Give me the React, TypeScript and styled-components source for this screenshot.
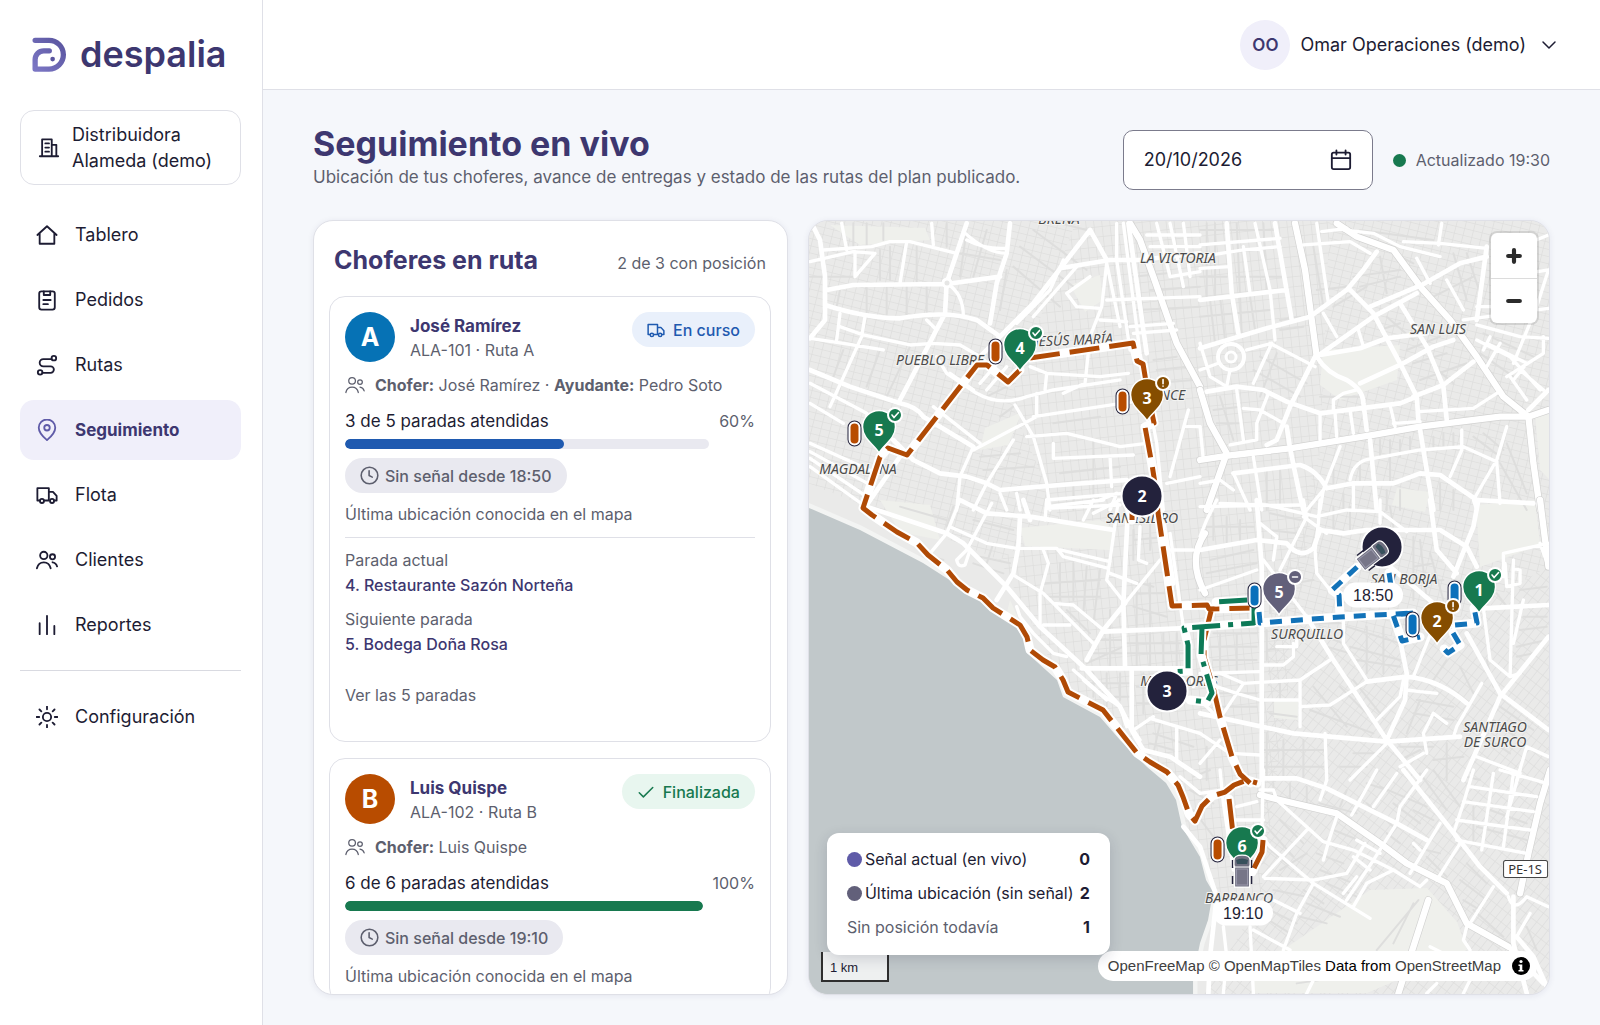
import React from "react";
import styled, { createGlobalStyle } from "styled-components";

const c = {
  ink: "#1d1c33",
  brand: "#3d3770",
  accent: "#5f5ba8",
  muted: "#5d5f6e",
  line: "#dfe0e7",
  page: "#f5f7fb",
  tint: "#f0effa",
  blue: "#1f5ab0",
  green: "#17794f",
  orange: "#b84c00",
  chip: "#e9e9f0",
};

const GlobalStyle = createGlobalStyle`
  *, *::before, *::after { box-sizing: border-box; }
  body {
    margin: 0;
    background: ${c.page};
    color: ${c.ink};
    font-family: Inter, "Open Sans", sans-serif;
    font-size: 16px;
    line-height: 24px;
  }
  h1, h2, h3, p, ul, dl, dd { margin: 0; padding: 0; }
  ul { list-style: none; }
  button, input { font: inherit; color: inherit; }
  a { color: inherit; text-decoration: none; }
`;

/* ---------- icons ---------- */

const Glyph = styled.svg<{ $size?: number; $weight?: number }>`
  width: ${(p) => p.$size ?? 24}px;
  height: ${(p) => p.$size ?? 24}px;
  flex: none;
  fill: none;
  stroke: currentColor;
  stroke-width: ${(p) => p.$weight ?? 2};
  stroke-linecap: round;
  stroke-linejoin: round;
`;

type IconName =
  | "building" | "home" | "clipboard" | "route" | "pin" | "truck" | "users"
  | "bars" | "sun" | "chevron" | "calendar" | "clock" | "check";

const shapes: Record<IconName, React.ReactNode> = {
  building: <path d="M4.5 21V2.5h10.500V21M15 8.500h5V21M2 21h20M8 7h4M8 11.500h4M8 16h4" />,
  home: <path d="M1.500 12 12 2.500 22.500 12M4 10v11.500h16V10" />,
  clipboard: (
    <>
      <rect x="3.500" y="2.500" width="17" height="20" rx="2.500" />
      <path d="M8.500 2.500v4h7v-4M8 12h8M8 16.500h5" />
    </>
  ),
  route: (
    <>
      <circle cx="19.500" cy="4.500" r="2.500" />
      <circle cx="4.500" cy="20" r="2.500" />
      <path d="M17 5.500H8a4 4 0 0 0 0 8h8a3.500 3.500 0 0 1 0 7H7" />
    </>
  ),
  pin: (
    <>
      <path d="M12 23S3 15.500 3 9.500a9 9 0 0 1 18 0C21 15.500 12 23 12 23z" />
      <circle cx="12" cy="9.500" r="3" />
    </>
  ),
  truck: (
    <>
      <path d="M4 18H1.500V4.500h12.500V18H9M14 8.500h4.500L22.500 13v5H20" />
      <circle cx="6.500" cy="18.500" r="2.200" />
      <circle cx="17.500" cy="18.500" r="2.200" />
    </>
  ),
  users: (
    <>
      <circle cx="8.500" cy="7" r="4" />
      <path d="M1 21c1-4.500 3.800-6.500 7.500-6.500S15 16.500 16 21M18 14.500c2.600.3 4.200 1.800 5 4.500" />
      <circle cx="18" cy="8.500" r="2.800" />
    </>
  ),
  bars: <path d="M4 10v12M12 2v20M20 13v9" />,
  sun: (
    <>
      <circle cx="12" cy="12" r="4.500" />
      <path d="M12 .5v3M12 20.500v3M.5 12h3M20.500 12h3M3.800 3.800l2 2M18.200 18.200l2 2M3.800 20.200l2-2M18.200 5.800l2-2" />
    </>
  ),
  chevron: <path d="m4 8 8 8 8-8" />,
  calendar: (
    <>
      <rect x="2" y="4" width="20" height="18" rx="2" />
      <path d="M2 10h20M7 1.500V6M17 1.500V6" />
    </>
  ),
  clock: (
    <>
      <circle cx="12" cy="12" r="10.500" />
      <path d="M11.500 6v6l4 2" />
    </>
  ),
  check: <path d="m3 13 5.500 5.500L21 6" />,
};

const Icon = ({ name, size, weight }: { name: IconName; size?: number; weight?: number }) => (
  <Glyph viewBox="0 0 24 24" $size={size} $weight={weight} aria-hidden="true">
    {shapes[name]}
  </Glyph>
);

/* ---------- shell ---------- */

const Shell = styled.div`
  display: grid;
  grid-template-columns: 263px minmax(0, 1fr);
  height: 100vh;
`;

const Sidebar = styled.aside`
  display: flex;
  flex-direction: column;
  padding: 32px 21px 20px 20px;
  background: #fff;
  border-right: 1px solid ${c.line};
`;

const Brand = styled.a`
  display: flex;
  align-items: center;
  gap: 13px;
  height: 44px;
  padding-left: 11px;
  font-size: 36px;
  font-weight: 600;
  line-height: 44px;
  color: ${c.brand};
`;

const Mark = styled.svg`
  width: 36px;
  height: 37px;
  flex: none;
`;

const Tenant = styled.button`
  display: flex;
  align-items: center;
  gap: 12px;
  margin-top: 34px;
  padding: 10px 17px;
  height: 75px;
  border: 1px solid ${c.line};
  border-radius: 14px;
  background: #fff;
  font-size: 18px;
  line-height: 26px;
  text-align: left;
`;

const NavList = styled.ul`
  display: flex;
  flex-direction: column;
  gap: 5px;
  margin-top: 20px;
`;

const NavLink = styled.a<{ $active?: boolean }>`
  display: flex;
  align-items: center;
  gap: 17px;
  height: 60px;
  padding: 0 16px;
  border-radius: 14px;
  font-size: ${(p) => (p.$active ? 17 : 18)}px;
  font-weight: ${(p) => (p.$active ? 700 : 400)};
  color: ${(p) => (p.$active ? c.brand : c.ink)};
  background: ${(p) => (p.$active ? c.tint : "transparent")};

  svg { color: ${(p) => (p.$active ? c.accent : c.ink)}; }
`;

const Rule = styled.hr`
  width: 100%;
  margin: 15px 0 -4px;
  border: 0;
  border-top: 1px solid #d9dae1;
`;

const Column = styled.div`
  display: flex;
  flex-direction: column;
  min-width: 0;
  min-height: 0;
`;

const TopBar = styled.header`
  display: flex;
  justify-content: flex-end;
  align-items: center;
  flex: none;
  height: 90px;
  padding: 0 42px;
  background: #fff;
  border-bottom: 1px solid ${c.line};
`;

const UserMenu = styled.button`
  display: flex;
  align-items: center;
  gap: 10px;
  padding: 0;
  border: 0;
  background: none;
  font-size: 18px;

  > svg { margin-left: 4px; }
`;

const Initials = styled.span`
  display: grid;
  place-items: center;
  width: 50px;
  height: 50px;
  border-radius: 50%;
  background: ${c.tint};
  color: ${c.brand};
  font-size: 17px;
  font-weight: 600;
`;

const Main = styled.main`
  display: flex;
  flex-direction: column;
  gap: 30px;
  flex: 1;
  min-height: 0;
  padding: 30px 50px;
`;

const PageHead = styled.div`
  display: flex;
  justify-content: space-between;
  align-items: flex-end;
  padding-top: 2px;
`;

const Title = styled.h1`
  font-size: 34px;
  line-height: 43px;
  font-weight: 700;
  color: ${c.brand};
`;

const Muted = styled.p<{ $size?: number }>`
  font-size: ${(p) => p.$size ?? 16}px;
  line-height: ${(p) => (p.$size ? 25 : 24)}px;
  color: ${c.muted};
`;

const HeadTools = styled.div`
  display: flex;
  align-items: center;
  gap: 20px;
`;

const DateField = styled.label`
  display: flex;
  align-items: center;
  width: 250px;
  height: 60px;
  padding: 0 20px;
  border: 1px solid #7b7b8c;
  border-radius: 10px;
  background: #fff;
`;

const DateInput = styled.input`
  flex: 1;
  min-width: 0;
  padding: 0;
  border: 0;
  outline: 0;
  background: none;
  font-size: 18px;
`;

const IconButton = styled.button`
  display: grid;
  place-items: center;
  padding: 0;
  border: 0;
  background: none;
`;

const Updated = styled.span`
  display: flex;
  align-items: center;
  gap: 10px;
  font-size: 16px;
  color: ${c.muted};
`;

const Dot = styled.span<{ $color: string; $size: number }>`
  flex: none;
  width: ${(p) => p.$size}px;
  height: ${(p) => p.$size}px;
  border-radius: 50%;
  background: ${(p) => p.$color};
`;

const Panels = styled.div`
  display: grid;
  grid-template-columns: minmax(0, 16fr) minmax(0, 25fr);
  gap: 20px;
  flex: 1;
  min-height: 0;
`;

/* ---------- drivers ---------- */

const Panel = styled.section`
  display: flex;
  flex-direction: column;
  min-height: 0;
  overflow: hidden;
  border: 1px solid ${c.line};
  border-radius: 20px;
  background: #fff;
  box-shadow: 0 1px 6px rgba(40, 40, 90, 0.08);
`;

const PanelHead = styled.div`
  display: flex;
  justify-content: space-between;
  align-items: baseline;
  padding: 21px 21px 18px 20px;
`;

const PanelTitle = styled.h2`
  font-size: 25px;
  line-height: 36px;
  font-weight: 700;
  color: ${c.brand};
`;

const CardList = styled.ul`
  display: flex;
  flex-direction: column;
  gap: 16px;
  flex: 1;
  min-height: 0;
  overflow-y: auto;
  padding: 0 16px 0 15px;
  scrollbar-width: none;
`;

const Card = styled.li`
  flex: none;
  padding: 15px;
  border: 1px solid ${c.line};
  border-radius: 16px;
`;

const CardHead = styled.div`
  display: flex;
  align-items: flex-start;
  gap: 15px;
`;

const RouteBadge = styled.span<{ $color: string }>`
  display: grid;
  place-items: center;
  flex: none;
  width: 50px;
  height: 50px;
  border-radius: 50%;
  background: ${(p) => p.$color};
  color: #fff;
  font-size: 25px;
  font-weight: 700;
`;

const Person = styled.div`
  flex: 1;
  padding-top: 2px;
`;

const PersonName = styled.h3`
  font-size: 17px;
  line-height: 24px;
  font-weight: 700;
  color: ${c.brand};
`;

const Tag = styled.span<{ $fg: string; $bg: string; $gap?: number }>`
  display: inline-flex;
  align-items: center;
  gap: ${(p) => p.$gap ?? 8}px;
  height: 35px;
  padding: 0 15px;
  border-radius: 18px;
  background: ${(p) => p.$bg};
  color: ${(p) => p.$fg};
  font-size: 16px;
  font-weight: 500;
`;

const Crew = styled.div`
  display: flex;
  align-items: center;
  gap: 10px;
  margin-top: 11px;
  color: ${c.muted};
  font-size: 16px;
`;

const Progress = styled.div`
  display: grid;
  grid-template-columns: minmax(0, 1fr) auto;
  column-gap: 10px;
  row-gap: 6px;
  margin-top: 12px;
  font-size: 17px;
`;

const Track = styled.div`
  height: 10px;
  border-radius: 5px;
  background: ${c.chip};
  overflow: hidden;
`;

const Fill = styled.div<{ $color: string }>`
  height: 100%;
  border-radius: 5px;
  background: ${(p) => p.$color};
`;

const Signal = styled.div`
  display: flex;
  flex-direction: column;
  align-items: flex-start;
  gap: 9px;
  margin-top: 9px;
`;

const Stops = styled.dl`
  margin-top: 11px;
  padding-top: 10px;
  border-top: 1px solid ${c.line};
  font-size: 16px;
  line-height: 25px;

  dt { color: ${c.muted}; }
  dd { color: ${c.brand}; font-weight: 500; }
  dd + dt { margin-top: 9px; }
`;

const MoreButton = styled.button`
  height: 60px;
  margin: 8px 0 1px;
  padding: 0;
  border: 0;
  background: none;
  color: ${c.muted};
  font-size: 16px;
`;

interface Driver {
  letter: string; color: string; name: string; unit: string; helper?: string;
  done: number; total: number; bar: string; last: string;
  status: { text: string; icon: IconName; fg: string; bg: string };
  current?: string; next?: string;
}

const drivers: Driver[] = [
  {
    letter: "A", color: "#0672b5", name: "José Ramírez", unit: "ALA-101 · Ruta A", helper: "Pedro Soto",
    done: 3, total: 5, bar: c.blue, last: "18:50",
    status: { text: "En curso", icon: "truck", fg: c.blue, bg: "#e9f0fb" },
    current: "4. Restaurante Sazón Norteña", next: "5. Bodega Doña Rosa",
  },
  {
    letter: "B", color: c.orange, name: "Luis Quispe", unit: "ALA-102 · Ruta B",
    done: 6, total: 6, bar: c.green, last: "19:10",
    status: { text: "Finalizada", icon: "check", fg: c.green, bg: "#e8f6ef" },
  },
];

const DriverCard = ({ d }: { d: Driver }) => {
  const percent = Math.round((d.done / d.total) * 100);
  return (
    <Card>
      <CardHead>
        <RouteBadge $color={d.color}>{d.letter}</RouteBadge>
        <Person>
          <PersonName>{d.name}</PersonName>
          <Muted>{d.unit}</Muted>
        </Person>
        <Tag $fg={d.status.fg} $bg={d.status.bg}>
          <Icon name={d.status.icon} size={18} />
          {d.status.text}
        </Tag>
      </CardHead>
      <Crew>
        <Icon name="users" size={20} weight={1.5} />
        <span>
          <b>Chofer:</b> {d.name}
          {d.helper && <> · <b>Ayudante:</b> {d.helper}</>}
        </span>
      </Crew>
      <Progress>
        <span>{d.done} de {d.total} paradas atendidas</span>
        <Muted as="span">{percent}%</Muted>
        <Track>
          <Fill $color={d.bar} style={{ width: `${percent}%` }} />
        </Track>
      </Progress>
      <Signal>
        <Tag $fg={c.muted} $bg={c.chip} $gap={6}>
          <Icon name="clock" size={19} />
          Sin señal desde {d.last}
        </Tag>
        <Muted>Última ubicación conocida en el mapa</Muted>
      </Signal>
      {d.current && (
        <>
          <Stops>
            <dt>Parada actual</dt>
            <dd>{d.current}</dd>
            <dt>Siguiente parada</dt>
            <dd>{d.next}</dd>
          </Stops>
          <MoreButton>Ver las {d.total} paradas</MoreButton>
        </>
      )}
    </Card>
  );
};

/* ---------- map ---------- */

const MapPanel = styled.section`
  position: relative;
  min-height: 0;
  overflow: hidden;
  border: 1px solid ${c.line};
  border-radius: 20px;
  background: #ededeb;
  box-shadow: 0 1px 6px rgba(40, 40, 90, 0.08);
`;

const MapCanvas = styled.svg`
  display: block;
  width: 100%;
  height: 100%;
`;

const PlaceName = styled.text`
  font: italic 14px "Noto Sans", sans-serif;
  fill: #4b4b4b;
  stroke: #f4f4f2;
  stroke-width: 2px;
  paint-order: stroke;
  text-anchor: middle;
`;

const MarkerText = styled.text`
  font: 700 16px "Noto Sans", sans-serif;
  fill: #fff;
  text-anchor: middle;
`;

const TimeText = styled.text`
  font: 16px "Liberation Sans", sans-serif;
  fill: ${c.ink};
  text-anchor: middle;
`;

const ShieldText = styled.text`
  font: 13px "Noto Sans", sans-serif;
  fill: #333;
  text-anchor: middle;
`;

const ZoomControls = styled.div`
  position: absolute;
  top: 12px;
  right: 12px;
  width: 46px;
  border-radius: 6px;
  background: #fff;
  box-shadow: 0 0 0 2px rgba(0, 0, 0, 0.1);
`;

const ZoomButton = styled.button`
  display: grid;
  place-items: center;
  width: 46px;
  height: 45px;
  padding: 0;
  border: 0;
  background: none;
  color: #2b2b2b;

  & + & { border-top: 1px solid #dcdcdc; }
`;

const Legend = styled.ul`
  position: absolute;
  left: 18px;
  bottom: 39px;
  z-index: 1;
  display: flex;
  flex-direction: column;
  gap: 10px;
  width: 283px;
  padding: 14px 20px 16px;
  border-radius: 12px;
  background: #fff;
  box-shadow: 0 4px 14px rgba(30, 30, 60, 0.16);
`;

const LegendRow = styled.li<{ $muted?: boolean }>`
  display: flex;
  align-items: center;
  gap: 3px;
  font-size: 16px;
  line-height: 24px;
  color: ${(p) => (p.$muted ? c.muted : c.ink)};

  b { margin-left: auto; color: ${c.ink}; font-weight: 700; }
`;

const Scale = styled.div`
  position: absolute;
  left: 12px;
  bottom: 12px;
  width: 68px;
  height: 30px;
  padding: 6px 7px;
  border: 2px solid #2e2e2e;
  border-top: 0;
  background: rgba(255, 255, 255, 0.72);
  font: 13px/20px "Liberation Sans", sans-serif;
`;

const Attribution = styled.div`
  position: absolute;
  right: 12px;
  bottom: 13px;
  display: flex;
  align-items: center;
  gap: 10px;
  height: 30px;
  padding: 0 6px 0 10px;
  border-radius: 15px;
  background: #fff;
  font: 15px/30px "Liberation Sans", sans-serif;
  color: #000;
  white-space: nowrap;

  a { color: #404040; }
`;

/* Streets are kept per survey sheet; each sheet uses a 3:1 grid over the map units. */
interface Sheet { x: number; y: number; minor: string; streets: string; avenues: string; highways?: string }

const sheets: Sheet[] = [
  {
    x: 800, y: 210,
    minor: "M160 40V120M200 40V110M250 40V90M440 40V110M30 200H160M240 120V210M270 110V210M350 110V215M480 130 600 150M120 240 110 290M200 230V310M260 230V320M320 230V320M380 230V310M130 420 100 500M240 420 200 530M330 410 260 560M500 60 480 200M560 60 520 200M620 180 600 300M700 60 860 180M660 110 820 230M640 170 780 290M860 60 700 20M1000 200 1100 190M1050 240 1200 230M1010 300 1200 290M560 560 640 520M600 620 640 590M540 740 660 730M550 780 700 770M760 640 900 620M780 790 960 770M820 830V900M880 690V900M1060 450 1130 440M1070 480 1160 470M1060 520 1180 510",
    streets: "M30 155 160 125 225 130 165 200V125M125 40 140 120M70 120 215 110 270 95 330 95 470 130M300 220 320 95M395 40 400 105M440 220Q490 250 490 320M490 65Q560 130 620 130M500 90Q560 120 620 115M120 310 110 390M195 320 185 380 90 590M120 350 190 375M380 330 410 360M30 385 130 400 250 420M190 375 330 405 400 400 480 405 540 440 610 500M410 440 440 490 530 550Q600 590 680 560L760 540 960 510M690 470 740 490 900 500 985 490M740 490 735 540M30 520 200 610 210 690M30 580 130 640M30 700 230 790M30 725 220 830M30 745 200 860M30 770 190 885M400 590 540 700M520 710 480 800 470 900M645 585 700 680 740 820 750 900M680 680 800 670 880 690 960 710 1040 700M710 550V620L520 720M700 620 1000 575M760 700V745L1000 735M740 870 970 850M740 895 960 885M930 740 935 830M790 150 750 240 650 340M830 170 700 320M870 200 800 250 830 290 900 295M920 160 905 290 870 380 855 520 790 550M920 270 1200 260M900 330 980 335M990 350 1120 340M1000 370 1130 360M920 160 960 350M1165 600 1110 800M1160 650H1200M1100 820 1200 800M1070 40 1110 200M1110 40 1150 230M1150 40 1170 200M1050 110H1200M1040 75H1200M1110 200 1200 185M560 540 620 470M540 520 600 450M450 490 520 540M640 690 560 820 520 900M600 850 620 900M650 850 660 900M950 40V150L990 420M970 40 1020 430 1070 700 1090 900M900 870 950 850 930 900",
    avenues: "M30 30 60 90 75 200V330L30 385M80 240 160 225 440 222 600 200M500 40 440 220 435 310 300 570M630 40 620 130 590 220 570 340M75 285Q200 325 300 325Q440 300 530 330L600 380M30 480 150 530 300 580Q350 590 370 620L520 710M280 690 340 750 420 790 500 800 560 820 600 840 780 825 980 810M190 900 300 740M870 60 700 280 540 440M870 60 920 150M780 175 930 150 1020 150 1200 130M985 40 1040 430",
    highways: "M990 40 1020 90 1060 200 1130 400 1200 530",
  },
  {
    x: 1200, y: 210,
    minor: "M20 40V260M45 40V260M110 40 125 370M190 40 200 250M0 60H220M0 200H80M110 200H250M0 320 210 300M30 270 45 400M60 260 75 390M150 260 165 360M240 330 300 320M240 360 310 350M480 60 700 90M500 90 640 160M460 200 600 180M480 230 600 200M400 290 500 230M350 240 440 230M760 130 800 270M800 130 840 250M700 260 820 200M560 320 640 390M540 360 600 340M620 420 720 380M640 460 740 430M660 510 800 460M700 470 760 520M360 560 480 560M180 440 320 520M160 480 300 560M230 430 180 560M60 560 100 690M40 600 120 590M50 640 120 640M540 690V740M570 690V820M600 690V740M630 680V720M700 680V710M730 670V710M760 670V710M200 780V900M240 770V900M400 750V820M430 850V900M480 760V820M560 840V900M600 840V900M720 820V900M760 840V900M820 680 900 740M850 670 910 720M920 700 980 850M900 760 980 900M850 370 1000 440M840 430 940 500M540 140 560 250M340 110 370 290",
    streets: "M0 105 240 85M0 140 130 120 240 110M0 175 90 170M130 110 150 250M165 40 210 240 225 390M350 40 385 280M365 65 440 55M430 60 520 70 600 110 720 140M610 95 720 100 860 115M725 40 715 105M310 105 450 95 510 130M650 145 690 220M740 210 790 300M370 310 410 380M475 360 490 410M400 600V570L430 550 470 540M210 400 345 470M215 400 160 520M140 420 215 400M0 400 30 500 80 530 90 480M0 480 55 460M110 540 130 690M130 595 180 600 250 640M205 550 170 640V690L90 705M160 740 185 900M655 605 820 595 890 550M0 650 10 750M360 610V690M405 610 410 680M450 600 460 670M570 585 585 650M580 640 660 635M785 660V720L750 800M450 810Q460 750 520 745L660 720 790 710 890 755 900 880M920 650 890 750 820 870 830 900M420 710 370 840 320 900M830 345 960 380 1045 385M790 330 1045 295M830 290 900 290M1045 180 1010 290 940 460M830 390 930 440 1020 540M870 380 850 420M900 400 860 470M860 400 980 460 940 510M930 500 980 570M960 480 1030 540M1030 380V430L920 500M980 190 1045 180M960 110 1045 75M100 790 150 900M0 820 60 810 100 840M0 890 300 885M370 840 360 900M460 820V900",
    avenues: "M80 40 95 250 115 370M0 270 260 240M225 40 275 330M0 415 200 355 330 320 440 240 490 180 530 125M510 290 665 225 780 160 860 140M350 440 520 320 650 250M450 240 520 310 600 460 650 560 655 630M600 280 680 410 730 530 740 630M360 435 480 415 560 385 680 370M350 440Q380 490 440 510Q490 540 490 580L500 660M480 520 600 465 700 410 760 390M640 560 730 525 820 455M20 545 110 530 190 540 260 575 360 610 600 580 650 560M345 440 270 590 230 690 200 705M260 650 270 715 300 860 310 900M100 790 300 765Q350 780 380 835L460 820 580 820 660 790 720 795 830 870 1000 880M510 690 530 900M660 660 700 900M860 110 830 330M1045 540 985 600",
    highways: "M285 40 315 180 350 440M410 40 470 80 580 120 665 235 750 330 830 440 910 560 985 620 1045 600M0 540 30 640 80 730 20 900M0 750 100 735 270 715 520 675 660 650 900 620 985 620 1000 760 1020 900",
  },
  {
    x: 800, y: 500,
    minor: "M460 20 440 80M300 20 440 60M400 170 430 180M520 60 640 90M540 170 630 190M520 190 610 220M580 130 560 190M780 190V300M820 190V300M860 200 850 340M900 210 880 370M730 250 900 240M740 290 900 290M800 330 870 400M930 330V500M890 420 970 420M880 460 970 460M860 490 970 440M1010 400V500M1050 400V500M1090 400V500M1130 400V500M980 430 1140 430M980 460 1150 460M1000 90V180M1050 20V150M1000 120 1100 110M990 240 1060 260M1010 280 1110 280M1000 320 1100 350M1010 250V380M1050 250V380M880 520V590M920 520V620M960 520V600M870 550 990 550M900 590 990 590M1030 520V640M1010 560H1060M1010 610H1060M1060 700 1180 740M1050 730 1120 750M1080 670 1060 760",
    streets: "M480 0 440 100 390 160M575 10 500 150 470 180Q475 205 495 195L510 150M450 80 560 130 650 145 770 145 790 170 925 205M730 150 745 190 720 280V380M640 225 730 280 760 310 880 430M780 150 930 185M930 220 1010 250M1020 80 1015 180 1040 190M760 310 820 315 910 390M730 375H810M880 0 850 60M740 20 910 0M1060 650 1000 690M1050 655 1200 700M1130 680V780M1110 150H1180M1110 100 1150 380 1180 560M650 320 660 350 700 400 760 460 800 470M820 510 900 580 960 620 980 680M1000 690 1020 720M955 0 930 180 920 240 975 310 1080 180M740 0 735 60M880 40 960 0M850 540 920 600",
    avenues: "M200 20 440 100 490 130 620 260 720 380 850 500 960 620 1000 700 1030 750 1110 770 1200 830M480 0 560 40 690 50 940 90M690 60 670 0M660 50 655 140 640 220 590 300M985 0 970 310 975 500M975 310 910 390 860 480M910 395 1140 385M845 505H1160M995 510V690M1080 0 1120 250",
    highways: "M1215 100Q1160 180 1215 280",
  },
  {
    x: 1200, y: 500,
    minor: "M40 40V120M80 50V130M120 60V120M20 80H160M210 40 300 60M200 90 290 100M400 20V90M450 20V90M570 20 580 80M640 110V300M660 120 680 300M690 160 730 300M640 200 700 190M640 250 730 240M220 260 340 240M210 230V340M30 180 160 150M20 220 170 190M40 400 170 400M30 440H170M40 480H170M60 400V510M110 400V510M200 450 270 440M200 390V480M240 550V600M210 640 290 650M340 370 420 370M350 400 430 430M380 440 450 460M440 380 600 430M450 440 600 480M470 480 600 500M500 380V520M550 380V520M420 560 500 640M460 540 540 640M340 560 440 680M330 630 520 700M650 600 760 620M640 640 760 660M660 600 620 700M780 500 820 580M740 480 700 540M880 560 860 480M950 440 1040 420M950 470 1000 460M900 620 1000 690M880 660 960 720M870 720 930 760M600 740 700 740M600 780 660 750M700 780 790 770M740 730V840M460 760 540 760M420 800 500 800M200 700V840M250 720V840M310 720V840M190 750H370M190 800H370M890 280 920 320M960 270 1040 260M970 350 1040 350M960 390 1040 380M60 580 170 580M50 620 170 620M20 740V840",
    streets: "M0 110 20 60 50 0M60 10 200 15 350 50 440 30 540 35 620 95M240 210 320 50 310 0M360 0 355 70 345 150 350 220 390 270M310 50 380 100M180 70 230 110 220 180M540 0V70M0 270 170 210M190 180 320 350M430 340V430L500 540M280 430V470L250 495H190M230 440H290V420M0 520 180 515M60 520 130 550 300 540 390 480M50 560 110 580 180 600H300V540M130 550 70 640M300 620 390 615 500 545M700 380 640 530M620 570 660 575 710 580M610 540 600 590 530 660M845 550 770 680 760 710M850 325 870 480 930 530M940 180 930 530 960 520M970 300 940 430M300 540V680M375 700 380 840M560 730 450 840M680 760 670 700 700 640 740 670M670 760 600 800M830 770 960 820M1045 770 980 740 950 840M910 230V160L1045 130M915 190 920 260 960 250V210L940 205M0 700 90 760 180 765M60 720 0 790M1020 130 1045 200M0 600 50 650",
    avenues: "M0 150 170 120 260 130Q300 180 340 145L360 90 430 100 500 90 720 90 800 140 830 200M170 0 185 200V840M690 0 710 150 770 220M835 0 820 80 760 230M500 545 620 530Q720 540 800 610M600 420 620 520 615 600 560 720M850 325 1045 315M1045 410 900 590 830 750 790 840M0 640 280 700 560 725 780 710M320 350 400 480 560 720 660 840M800 400 900 580 1045 690M570 200 700 310",
    highways: "M1020 0 1030 80 1045 200",
  },
  {
    x: 1180, y: 770,
    minor: "M40 20 90 0M30 60 100 100M280 40V80M330 40V90M380 50V100M420 100 530 130M500 60 480 110M560 100 640 170M600 50 740 110M640 100 720 160M700 120 760 150M560 40 620 60M720 10 800 120M760 0 840 110M860 20 900 30M700 230 780 250M620 190 660 220M740 260 800 320M860 280 920 340M840 330 920 390M850 390 900 420M880 420 970 500M260 170 340 260M300 150 370 220M260 230 320 280M300 300 380 250M410 250 490 280M460 180 560 220M420 300 520 340M440 340 530 380M280 360 380 380M270 420 350 460M250 440 330 490M380 400 480 440M360 440 440 460M370 360 430 400M180 220 240 210M170 260 230 270M880 110 880 220M930 120 1040 160M890 170 1040 210M1040 470 1070 540M715 390 590 540M700 400 640 520M40 120 100 200M100 230 150 240M230 560 460 600M350 640 560 610",
    streets: "M0 20 60 70 130 60M440 30 420 90M590 0 515 135M650 10 580 110M880 0 850 100 820 190 830 205M870 50 1070 80M850 95 1060 125M830 150 1050 180M830 210 1040 250M940 10 905 240M1000 10 970 230M1020 0 980 140M960 0 1100 40M780 160 690 310M840 220 770 330M650 160 660 110 740 0M650 160 580 270 500 390M470 140 450 200 430 270M380 180 250 320M290 90 430 215 520 240 640 300 720 350 740 330M255 325 400 330 500 310 555 220M400 340 570 445M400 340 350 430 310 540M280 390 360 430M520 410 560 340 640 300M530 210 600 250M520 260 570 300M490 370 530 320M700 220 720 240M165 150H250M170 110 230 95M120 0 130 100 160 300M250 0 245 200 270 230 400 340M130 470 140 560 130 670M210 470 220 670M220 480 330 540M940 350 870 460M860 470 850 510 870 540M985 380Q1000 430 1040 380L1105 410M1050 430 1010 500M400 630 380 670M770 640 740 670M870 630 850 670M750 530 790 550M240 60H280L290 90",
    avenues: "M250 25H350L440 55 650 160 740 210M10 170 60 230 110 380 90 560 85 670M670 0 830 200 900 290 980 370M1000 380V520L1040 670M985 530 1090 640M1010 500 1060 560 1100 650",
    highways: "M240 75 300 90 470 130 600 220 680 280 800 340 860 460 985 530M1110 0 1080 100 1045 250 1020 370M745 390 655 670",
  },
];

const sheetAt = (s: { x: number; y: number }) => `translate(${s.x} ${s.y}) scale(${1 / 3})`;

const sea =
  "M800 504 860 530 923 563 973 595 1013 623 1023 637 1027 653 1057 680 1063 697 1100 717 1120 740 1147 767 1166 783 1176 800 1182 827 1200 857 1206 880 1213 892 1208 920 1200 943 1193 977V1000H800Z";

const parks = [
  "M1020 528 1100 520 1113 528 1110 550 1025 546Z",
  "M1476 505 1535 500 1540 545 1480 567Z",
  "M1370 890 1427 888 1457 922 1467 950 1367 993H1253V955L1283 950Z",
  "M1323 350 1400 345 1397 380 1340 400 1320 385Z",
  "M1070 285 1100 275 1103 300 1085 312Z",
  "M1005 620 1030 645 1010 600Z",
  "M985 428 1022 412 1008 445 980 450Z",
  "M880 500 930 505 940 540 900 532Z",
  "M830 225 925 228 930 240 860 245Z",
  "M1535 415 1550 410V480L1540 470Z",
  "M1274 700 1298 702V720L1274 718Z",
  "M1397 488 1430 492 1425 512 1392 505Z",
];

const routes = {
  orange: [
    "M1020 370 1008 382 987 365 977 365 907 455 888 448 880 457 863 508 872 515 897 532 917 543 928 555 947 570 957 582 967 590 983 598 993 608 1020 625 1027 637 1030 650 1043 660 1055 667 1063 680 1068 692 1103 710 1125 738 1137 753 1150 762 1167 772 1178 785 1183 797 1189 814 1195 821 1202 806 1212 796 1225 792 1234 785 1247 780 1257 783",
    "M1030 358 1133 343 1137 361 1143 364 1149 400 1154 423 1145 427 1152 465 1156 490 1158 513 1172 606 1207 605 1209 609 1255 608",
    "M1211 611 1204 640 1204 657 1213 687 1220 717 1232 757 1240 774 1250 783",
    "M1229 799 1236 860M1263 840 1262 852 1252 872M1132 510V520",
  ],
  green: [
    "M1247 600 1216 602",
    "M1254 608V623L1184 628 1188 645V671L1170 672",
    "M1202 626 1201 655 1212 693 1207 702 1190 700",
  ],
  blue: [
    "M1259 612 1260 623 1340 617 1413 613M1413 613 1393 615 1402 641 1420 637",
    "M1357 567 1332 590 1339 595 1340 617M1389 573 1391 586",
    "M1455 625 1477 623 1474 608M1453 633 1460 645 1448 653 1444 649",
  ],
};

const Lines = ({ paths, color, dash }: { paths: string[]; color: string; dash: string }) => (
  <g fill="none" strokeLinejoin="round">
    {paths.map((d) => <path key={d} d={d} stroke="#fff" strokeWidth="9" strokeLinecap="round" />)}
    {paths.map((d) => <path key={d} d={d} stroke={color} strokeWidth="5" strokeDasharray={dash} />)}
  </g>
);

const places: [string, number, number, number?][] = [
  ["BREÑA", 1059, 224], ["LA VICTORIA", 1178, 263], ["PUEBLO LIBRE", 940, 365],
  ["JESÚS MARÍA", 1074, 345, -2], ["LINCE", 1167, 400], ["MAGDALENA", 858, 474],
  ["SAN ISIDRO", 1142, 523], ["SAN LUIS", 1438, 334], ["SAN BORJA", 1404, 584],
  ["SURQUILLO", 1307, 639], ["MIRAFLORES", 1179, 686], ["SANTIAGO", 1495, 732],
  ["DE SURCO", 1495, 747], ["BARRANCO", 1239, 903],
];

type Mark = "ok" | "warn" | "skip";
interface Stop { x: number; y: number; n: number; state: Mark; route: string }

const fills: Record<Mark, string> = { ok: "#17794f", warn: "#854d00", skip: "#62607a" };
const signs: Record<Mark, string> = { ok: "M-3 0-1 2.500 3.500-2.500", warn: "M0-3.500V.8M0 3V3.200", skip: "M-2.500 0H2.500" };

const stops: Stop[] = [
  { x: 1020, y: 345, n: 4, state: "ok", route: c.orange },
  { x: 879, y: 427, n: 5, state: "ok", route: c.orange },
  { x: 1147, y: 395, n: 3, state: "warn", route: c.orange },
  { x: 1279, y: 589, n: 5, state: "skip", route: "#0a70bb" },
  { x: 1479, y: 587, n: 1, state: "ok", route: "#0a70bb" },
  { x: 1437, y: 618, n: 2, state: "warn", route: "#0a70bb" },
  { x: 1242, y: 843, n: 6, state: "ok", route: c.orange },
];

const StopPin = ({ x, y, n, state, route }: Stop) => (
  <g transform={`translate(${x} ${y})`}>
    <rect x="-31" y="-6" width="13" height="25" rx="6.500" fill="#fff" stroke="#23223c" />
    <rect x="-28.500" y="-3.500" width="8" height="20" rx="4" fill={route} />
    <path
      d="M0 26C-4 18-16.500 12-16.500 0A16.500 16.500 0 0 1 16.500 0C16.500 12 4 18 0 26Z"
      fill={fills[state]} stroke="#fff" strokeWidth="1.500"
    />
    <MarkerText y="9">{n}</MarkerText>
    <circle cx="16" cy="-12" r="7" fill={fills[state]} stroke="#fff" strokeWidth="2" />
    <path d={signs[state]} transform="translate(16 -12)" fill="none" stroke="#fff" strokeWidth="1.600" strokeLinecap="round" />
  </g>
);

const Cluster = ({ x, y, n }: { x: number; y: number; n?: number }) => (
  <g transform={`translate(${x} ${y})`}>
    <circle r="20.500" fill="#23223c" stroke="#fff" strokeWidth="2" />
    {n && <MarkerText y="6">{n}</MarkerText>}
  </g>
);

const Van = ({ x, y, angle }: { x: number; y: number; angle: number }) => (
  <g transform={`translate(${x} ${y}) rotate(${angle})`}>
    <path d="M-9.500-11V-3M9.500-11V-3M-9.500 5V13M9.500 5V13" stroke="#23223c" strokeWidth="1.500" />
    <path d="M-8-11Q-8-16 0-16Q8-16 8-11V-5H7.500V16H-7.500V-5H-8Z" fill="#6f6f80" stroke="#fff" strokeWidth="1.200" />
    <path d="M-6-11Q0-14 6-11L5-7H-5Z" fill="#38505c" />
    <path d="M-8-4H8" stroke="#fff" />
    <rect x="-5.500" y="-2" width="11" height="16" fill="#777688" stroke="#9b9aac" />
  </g>
);

const TimePill = ({ x, y, text }: { x: number; y: number; text: string }) => (
  <g transform={`translate(${x} ${y})`}>
    <rect x="-30" y="-12.500" width="60" height="25" rx="12.500" fill="#fff" />
    <TimeText y="6">{text}</TimeText>
  </g>
);

const CityMap = () => (
  <MapCanvas viewBox="809 221 740 773" preserveAspectRatio="xMidYMid slice" role="img" aria-label="Mapa de rutas en Lima">
    <defs>
      <pattern id="blocksA" width="9" height="7" patternUnits="userSpaceOnUse" patternTransform="rotate(14)">
        <path d="M0 0H9M0 0V7" stroke="#dededd" strokeWidth="1.400" fill="none" />
      </pattern>
      <pattern id="blocksB" width="8" height="10" patternUnits="userSpaceOnUse" patternTransform="rotate(-6)">
        <path d="M0 0H8M0 0V10" stroke="#dededd" strokeWidth="1.400" fill="none" />
      </pattern>
      <pattern id="blocksC" width="7" height="11" patternUnits="userSpaceOnUse" patternTransform="rotate(38)">
        <path d="M0 0H7M0 0V11" stroke="#dededd" strokeWidth="1.400" fill="none" />
      </pattern>
    </defs>
    <rect x="800" y="210" width="760" height="800" fill="#eaeae9" />
    <path d="M800 210H1080L1010 400 1060 520 1000 560 800 480Z" fill="url(#blocksA)" />
    <path d="M1080 210H1330L1320 450 1260 900H1170L1000 560 1060 520 1010 400Z" fill="url(#blocksB)" />
    <path d="M1330 210H1560V560L1420 640 1270 620 1320 450Z" fill="url(#blocksA)" />
    <path d="M1270 620 1420 640 1560 560V1000H1200L1260 900Z" fill="url(#blocksC)" />
    <g fill="#eff0ec">{parks.map((d) => <path key={d} d={d} />)}</g>
    <path d={sea} fill="#c1c8ca" stroke="#f3f4f3" strokeWidth="9" strokeLinejoin="round" />
    <path d={sea} fill="#c1c8ca" />
    {sheets.map((s) => (
      <g key={`${s.x}-${s.y}`} transform={sheetAt(s)} fill="none" strokeLinejoin="round" strokeLinecap="round">
        <path d={s.minor} stroke="#dededd" strokeWidth="6" />
      </g>
    ))}
    {sheets.map((s) => (
      <g key={`${s.x}-${s.y}`} transform={sheetAt(s)} fill="none" strokeLinejoin="round" strokeLinecap="round">
        {s.highways && <path d={s.highways} stroke="#d2d2d1" strokeWidth="23" />}
        <path d={s.streets} stroke="#fff" strokeWidth="10" />
        <path d={s.avenues} stroke="#fff" strokeWidth="14" />
        {s.highways && <path d={s.highways} stroke="#fff" strokeWidth="19" />}
      </g>
    ))}
    <g fill="none" stroke="#fff" strokeWidth="4">
      <circle cx="1231" cy="357" r="13" />
      <circle cx="1231" cy="357" r="5" strokeWidth="3" />
      <circle cx="947" cy="283" r="4" strokeWidth="3" fill="#e6e6e5" />
    </g>
    {places.map(([name, x, y, turn]) => (
      <PlaceName key={name} x={x} y={y} transform={turn ? `rotate(${turn} ${x} ${y})` : undefined}>{name}</PlaceName>
    ))}
    <rect x="1503.500" y="860.500" width="44" height="17" rx="2" fill="#fff" stroke="#444" />
    <ShieldText x="1525" y="874">PE-1S</ShieldText>
    <Lines paths={routes.orange} color="#b04a05" dash="30 10" />
    <Lines paths={routes.green} color="#0d7a57" dash="28 8 5 8" />
    <Lines paths={routes.blue} color="#1272b8" dash="12 9" />
    <Cluster x={1142} y={496} n={2} />
    <Cluster x={1167} y={691} n={3} />
    <Cluster x={1382} y={547} />
    {stops.map((s) => <StopPin key={`${s.x}`} {...s} />)}
    <Van x={1373} y={555} angle={52} />
    <Van x={1242} y={871} angle={0} />
    <TimePill x={1373} y={595} text="18:50" />
    <TimePill x={1243} y={913} text="19:10" />
  </MapCanvas>
);

/* ---------- page ---------- */

const nav: { icon: IconName; text: string; active?: boolean }[] = [
  { icon: "home", text: "Tablero" },
  { icon: "clipboard", text: "Pedidos" },
  { icon: "route", text: "Rutas" },
  { icon: "pin", text: "Seguimiento", active: true },
  { icon: "truck", text: "Flota" },
  { icon: "users", text: "Clientes" },
  { icon: "bars", text: "Reportes" },
];

export default function App() {
  return (
    <>
      <GlobalStyle />
      <Shell>
        <Sidebar>
          <Brand href="#">
            <Mark viewBox="92 103 108 112" aria-hidden="true">
              <defs>
                <linearGradient id="mark" x1="0" y1="1" x2="1" y2="0">
                  <stop offset="0" stopColor="#7b76c4" />
                  <stop offset="1" stopColor="#5a559f" />
                </linearGradient>
              </defs>
              <path
                d="M104 116H146a43 43 0 0 1 0 87H104V174a26 26 0 0 1 26-26H147"
                fill="none" stroke="url(#mark)" strokeWidth="16" strokeLinecap="round" strokeLinejoin="round"
              />
              <circle cx="157" cy="173" r="7" fill="#5a559f" />
            </Mark>
            despalia
          </Brand>
          <Tenant>
            <Icon name="building" size={22} />
            <span>Distribuidora Alameda (demo)</span>
          </Tenant>
          <nav aria-label="Principal">
            <NavList>
              {nav.map((n) => (
                <li key={n.text}>
                  <NavLink href="#" $active={n.active} aria-current={n.active ? "page" : undefined}>
                    <Icon name={n.icon} size={22} />
                    {n.text}
                  </NavLink>
                </li>
              ))}
            </NavList>
            <Rule />
            <NavList>
              <li>
                <NavLink href="#">
                  <Icon name="sun" size={22} />
                  Configuración
                </NavLink>
              </li>
            </NavList>
          </nav>
        </Sidebar>

        <Column>
          <TopBar>
            <UserMenu>
              <Initials>OO</Initials>
              Omar Operaciones (demo)
              <Icon name="chevron" size={18} />
            </UserMenu>
          </TopBar>

          <Main>
            <PageHead>
              <div>
                <Title>Seguimiento en vivo</Title>
                <Muted $size={17}>
                  Ubicación de tus choferes, avance de entregas y estado de las rutas del plan publicado.
                </Muted>
              </div>
              <HeadTools>
                <DateField>
                  <DateInput type="text" defaultValue="20/10/2026" aria-label="Fecha" />
                  <IconButton type="button" aria-label="Abrir calendario">
                    <Icon name="calendar" size={22} />
                  </IconButton>
                </DateField>
                <Updated>
                  <Dot $color={c.green} $size={13} />
                  Actualizado 19:30
                </Updated>
              </HeadTools>
            </PageHead>

            <Panels>
              <Panel>
                <PanelHead>
                  <PanelTitle>Choferes en ruta</PanelTitle>
                  <Muted>2 de 3 con posición</Muted>
                </PanelHead>
                <CardList>
                  {drivers.map((d) => <DriverCard key={d.letter} d={d} />)}
                </CardList>
              </Panel>

              <MapPanel>
                <CityMap />
                <ZoomControls>
                  <ZoomButton aria-label="Acercar">
                    <Glyph viewBox="0 0 24 24" $size={20} $weight={5} aria-hidden="true"><path d="M5 12h14M12 5v14" /></Glyph>
                  </ZoomButton>
                  <ZoomButton aria-label="Alejar">
                    <Glyph viewBox="0 0 24 24" $size={20} $weight={5} aria-hidden="true"><path d="M5 12h14" /></Glyph>
                  </ZoomButton>
                </ZoomControls>
                <Legend>
                  <LegendRow><Dot $color={c.accent} $size={15} />Señal actual (en vivo)<b>0</b></LegendRow>
                  <LegendRow><Dot $color="#62607a" $size={15} />Última ubicación (sin señal)<b>2</b></LegendRow>
                  <LegendRow $muted>Sin posición todavía<b>1</b></LegendRow>
                </Legend>
                <Scale>1 km</Scale>
                <Attribution>
                  <span>
                    <a href="#">OpenFreeMap</a> <a href="#">© OpenMapTiles</a> Data from <a href="#">OpenStreetMap</a>
                  </span>
                  <IconButton aria-label="Información del mapa">
                    <svg width="20" height="20" viewBox="0 0 20 20" aria-hidden="true">
                      <circle cx="10" cy="10" r="9" fill="#000" />
                      <circle cx="10" cy="5.500" r="1.600" fill="#fff" />
                      <path d="M7.500 8.500h3.800v5.500h1.200v1.500H7.500V14h1.200v-4H7.500z" fill="#fff" />
                    </svg>
                  </IconButton>
                </Attribution>
              </MapPanel>
            </Panels>
          </Main>
        </Column>
      </Shell>
    </>
  );
}
